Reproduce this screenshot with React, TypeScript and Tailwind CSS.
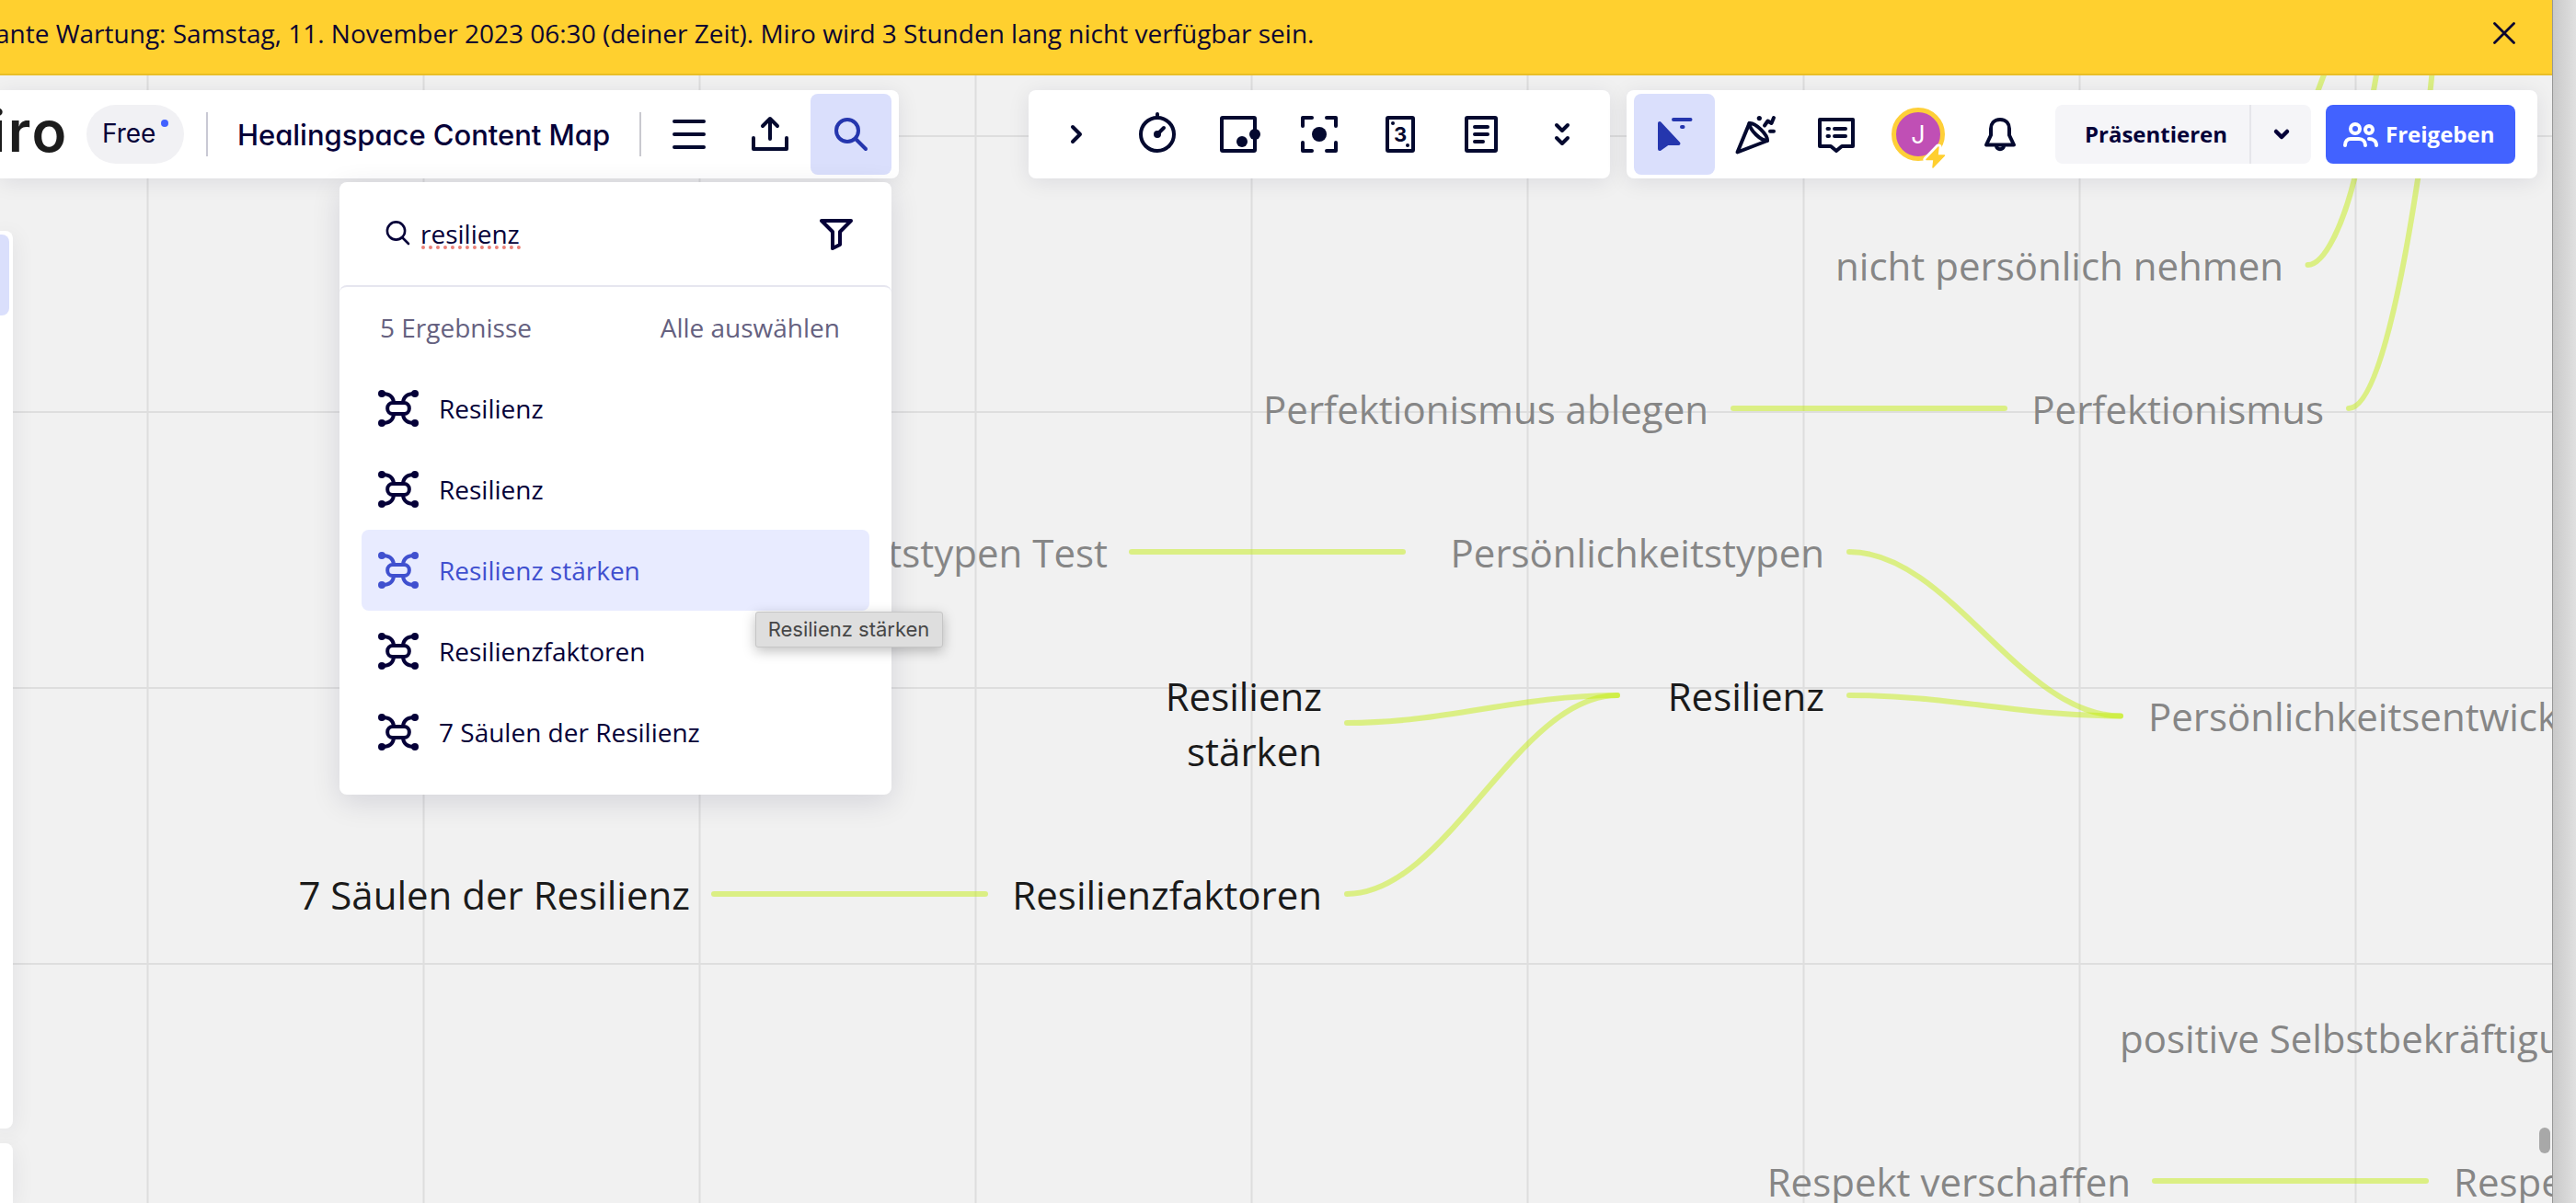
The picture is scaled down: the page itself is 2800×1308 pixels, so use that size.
import React, { useState } from 'react';
import clsx from 'clsx';

interface MapNode {
    text: string;
    baseline: number;
    left?: number;
    right?: number;
    found?: boolean;
}

// left / right are the edges of the text box on the board
const nodes: MapNode[] = [
    { text: 'nicht persönlich nehmen', right: 2482, baseline: 305 },
    { text: 'Perfektionismus ablegen', right: 1857, baseline: 461 },
    { text: 'Perfektionismus', right: 2526, baseline: 461 },
    { text: 'Persönlichkeitstypen Test', right: 1204, baseline: 617 },
    { text: 'Persönlichkeitstypen', right: 1983, baseline: 617 },
    { text: 'Resilienz\nstärken', right: 1437, baseline: 773, found: true },
    { text: 'Resilienz', right: 1983, baseline: 773, found: true },
    { text: 'Persönlichkeitsentwicklung', left: 2335, baseline: 795 },
    { text: '7 Säulen der Resilienz', right: 750, baseline: 989, found: true },
    { text: 'Resilienzfaktoren', right: 1437, baseline: 989, found: true },
    { text: 'positive Selbstbekräftigung', left: 2304, baseline: 1145 },
    { text: 'Respekt verschaffen', right: 2316, baseline: 1301 },
    { text: 'Respekt', left: 2667, baseline: 1301 },
];

const connectors = [
    'M2508.5 288C2527 288 2547 243 2559 195S2578 112 2584 76',
    'M2553 444C2585 444 2612 300 2628 195S2641 100 2644 76',
    'M2516 108L2528 76',
    'M1884 444H2179',
    'M1230 600H1525',
    'M2010 600C2119 600 2196 778.5 2305 778.5',
    'M2010 756C2119 756 2196 778.5 2305 778.5',
    'M1464 786C1573 786 1649 756 1758 756',
    'M1464 972C1573 972 1649 756 1758 756',
    'M776 972H1071',
    'M2342 1284H2637',
];

const results = ['Resilienz', 'Resilienz', 'Resilienz stärken', 'Resilienzfaktoren', '7 Säulen der Resilienz'];

interface ToolProps {
    label: string;
    active?: boolean;
    children: React.ReactNode;
}

const Tool: React.FC<ToolProps> = ({ label, active, children }) => (
    <button type="button" aria-label={label} className={clsx('h-[88px] w-[88px] shrink-0 rounded-lg', active ? 'bg-[#dadffc] text-[#2536ae]' : 'text-[#04092f]')}>
        <svg viewBox="0 0 88 88" className="h-[88px] w-[88px]" fill="none" stroke="currentColor" strokeWidth="4" strokeLinecap="round" strokeLinejoin="round">
            {children}
        </svg>
    </button>
);

const MindMapIcon = () => (
    <svg viewBox="0 0 44 40" className="h-10 w-11 shrink-0" fill="none" stroke="currentColor" strokeWidth="4" strokeLinecap="round">
        <rect x="10.2" y="14" width="23.6" height="12" rx="5.5" />
        <path d="M17 13C16 7 12 4 5 4M27 13C28 7 32 4 39 4M17 27C16 33 12 36 5 36M27 27C28 33 32 36 39 36" />
        <g fill="currentColor" stroke="none">
            <circle cx="4" cy="4" r="4" />
            <circle cx="40" cy="4" r="4" />
            <circle cx="4" cy="36" r="4" />
            <circle cx="40" cy="36" r="4" />
        </g>
    </svg>
);

const Board = () => (
    <div className="absolute inset-0 overflow-hidden bg-[#f1f1f1]">
        <svg className="absolute inset-0 h-full w-full" fill="none">
            {[160.5, 460.5, 760.5, 1060.5, 1360.5, 1660.5, 1960.5, 2260.5, 2560.5].map((x) => (
                <path key={x} d={`M${x} 0V1308`} stroke="#dedede" strokeWidth="2" />
            ))}
            {[148, 448, 748, 1048].map((y) => (
                <path key={y} d={`M0 ${y}H2774`} stroke="#dedede" strokeWidth="2" />
            ))}
            {connectors.map((d) => (
                <path key={d} d={d} stroke="#c1ee00" strokeOpacity="0.45" strokeWidth="6" strokeLinecap="round" />
            ))}
        </svg>
        {nodes.map((node) => (
            <p
                key={node.text}
                className={clsx('absolute text-[42px] leading-[60px] whitespace-pre', node.found ? 'text-[#1a1a1a]' : 'text-[#868686]', node.right && 'text-right')}
                style={{ left: node.left, right: node.right ? 2774 - node.right : undefined, top: node.baseline - 46 }}
            >
                {node.text}
            </p>
        ))}
        <div className="absolute top-[1226px] right-[2px] h-7 w-3 rounded-full bg-[#a8a8a8]" />
    </div>
);

const SearchPanel = () => {
    const [query, setQuery] = useState('resilienz');
    const [active, setActive] = useState(2);

    return (
        <div className="absolute top-[198px] left-[369px] flex h-[666px] w-[600px] flex-col rounded-lg bg-white text-[28px] leading-10 text-[#050038] shadow-[0_8px_32px_rgba(5,0,56,0.12)]">
            <div className="flex h-28 items-center pr-[42px] pl-[49px]">
                <svg viewBox="0 0 32 32" className="-mt-0.5 h-8 w-8" fill="none" stroke="currentColor" strokeWidth="2.6" strokeLinecap="round">
                    <circle cx="12.5" cy="14" r="9.6" />
                    <path d="M19.5 21.5L26 28" />
                </svg>
                <div className="relative ml-[7px] flex-1">
                    <input value={query} onChange={(e) => setQuery(e.target.value)} className="block h-10 w-[300px] outline-none" aria-label="Suche" />
                    {/* spell checker mark */}
                    <div className="absolute top-[33px] left-px w-[108px] border-b-4 border-dotted border-[#ea7f76]" />
                </div>
                <svg viewBox="0 0 36 36" className="mt-0.5 h-9 w-9" fill="none" stroke="currentColor" strokeWidth="4" strokeLinejoin="round">
                    <path d="M2 3H34L22 15V29L14 33V15Z" />
                </svg>
            </div>
            <div className="flex h-[90px] items-center justify-between rounded-t-lg border-t-2 border-[#e6e6ef] pr-[56px] pl-[44px] text-[#656180]">
                <span>5 Ergebnisse</span>
                <button type="button">Alle auswählen</button>
            </div>
            <ul className="px-6">
                {results.map((item, i) => (
                    <li
                        key={i}
                        onMouseEnter={() => setActive(i)}
                        className={clsx('flex h-[88px] items-center gap-[22px] rounded-lg pl-[18px]', i === active && 'bg-[#e8ebff] text-[#4050cf]')}
                    >
                        <MindMapIcon />
                        <span>{item}</span>
                    </li>
                ))}
            </ul>
        </div>
    );
};

const BoardBar = () => (
    <div className="flex h-24 w-[977px] items-center rounded-r-lg bg-white pr-2 shadow-[0_4px_24px_rgba(5,0,56,0.09)]">
        <div className="-ml-[10px] flex h-24 w-[104px] items-center font-['Inter',sans-serif] text-[62px] leading-none font-semibold tracking-[2.5px] text-[#1c1c1c]">
            <span className="-mt-1.5">iro</span>
        </div>
        <div className="flex h-16 w-[106px] shrink-0 rounded-full bg-[#f1f1f4] pl-[17px] font-['Inter',sans-serif] text-[28px] leading-[62px] text-[#050038]">
            Free
            <span className="mt-4 ml-[6px] h-2 w-2 rounded-full bg-[#4262ff]" />
        </div>
        <div className="ml-6 h-12 w-0.5 bg-[#c9c9d4]" />
        <h1 className="mt-0.5 ml-8 w-[437px] whitespace-nowrap font-['Inter',sans-serif] text-[31px] leading-10 font-medium tracking-[-0.04px] text-[#050038] [font-feature-settings:'cv11']">
            Healingspace Content Map
        </h1>
        <div className="h-12 w-0.5 bg-[#c9c9cf]" />
        <div className="ml-auto flex">
            <Tool label="Menü">
                <path d="M28 30H60M28 44H60M28 58H60" />
            </Tool>
            <Tool label="Exportieren">
                <path d="M44 27V49M36 35L44 27L52 35M26 48V60H62V48" />
            </Tool>
            <Tool label="Suche" active>
                <circle cx="40" cy="40" r="12" />
                <path d="M49.5 49.5L60 60" />
            </Tool>
        </div>
    </div>
);

const MeetingBar = () => (
    <div className="flex h-24 w-[632px] items-center rounded-lg bg-white px-2 shadow-[0_4px_24px_rgba(5,0,56,0.09)]">
        <Tool label="Einklappen">
            <path d="M40 36L48 44L40 52" />
        </Tool>
        <Tool label="Timer">
            <circle cx="44" cy="44" r="18" />
            <path d="M44 26V22M44 44L51 37" />
            <circle cx="44" cy="44" r="2.5" fill="currentColor" strokeWidth="3" />
        </Tool>
        <Tool label="Frames">
            <rect x="26" y="26" width="36" height="36" rx="1" />
            <g fill="currentColor" stroke="none">
                <circle cx="62" cy="44" r="6" />
                <circle cx="48" cy="52" r="6" />
            </g>
        </Tool>
        <Tool label="Fokus">
            <path d="M26 35V26H36M52 26H62V35M62 53V62H52M36 62H26V53" />
            <circle cx="44" cy="44" r="8" fill="currentColor" stroke="none" />
        </Tool>
        <Tool label="Schätzen">
            <rect x="30" y="26" width="28" height="36" rx="1" />
            <g fill="currentColor" stroke="none">
                <circle cx="36" cy="32" r="2" />
                <circle cx="52" cy="56" r="2" />
                <text x="44" y="52" textAnchor="middle" className="font-['Inter',sans-serif] text-[22px] font-bold">3</text>
            </g>
        </Tool>
        <Tool label="Notizen">
            <rect x="28" y="26" width="32" height="36" rx="1" />
            <path d="M37 36H51M37 44H51M37 52H46" />
        </Tool>
        <Tool label="Mehr">
            <path d="M38 34L44 40L50 34M38 48L44 54L50 48" />
        </Tool>
    </div>
);

const ShareBar = () => (
    <div className="flex h-24 w-[990px] items-center rounded-lg bg-white pl-2 shadow-[0_4px_24px_rgba(5,0,56,0.09)]">
        <Tool label="Cursor" active>
            <path d="M28 32V60L36.5 54H48.5Z" fill="currentColor" />
            <path d="M43 28H61.5M52 36H53.5" />
        </Tool>
        <Tool label="Reaktionen">
            <path d="M37.5 32L24.5 63.5L57 51" />
            <path d="M37.5 32C44 31 58 45 57 51C50 51 38 40 37.5 32Z" />
            <path d="M54 34.5L57.5 29.5L61.5 32L64 26M60 40.7H64" />
            <circle cx="48.3" cy="26.6" r="2.6" fill="currentColor" stroke="none" />
        </Tool>
        <Tool label="Kommentare">
            <path d="M26 28H62V57H50L44 62L38 57H26Z" />
            <path d="M34.5 38H36M42 38H54M34.5 46H36M42 46H54" />
        </Tool>
        <Tool label="Profil">
            <circle cx="45" cy="44" r="26.5" fill="#c04fb5" stroke="#fecf38" strokeWidth="5" />
            <text x="45" y="54" textAnchor="middle" fill="#fff" stroke="none" className="font-['Inter',sans-serif] text-[27px]">J</text>
            <path d="M67 58L54 71.5H62L61 80L73.5 67H66Z" fill="#fff" stroke="#fff" strokeWidth="7" />
            <path d="M67 58L54 71.5H62L61 80L73.5 67H66Z" fill="#ffcf2f" stroke="#ffcf2f" strokeWidth="1.5" />
        </Tool>
        <Tool label="Benachrichtigungen">
            <path d="M46 28C39 28 36 33 36 38V45L31 55.5H61L56 45V38C56 33 53 28 46 28Z" />
            <path d="M42 56.5C42 61.5 50 61.5 50 56.5" />
        </Tool>
        <div className="ml-[18px] flex h-16 w-[278px] overflow-hidden rounded-lg bg-[#f5f5f8] text-2xl font-bold text-[#050038]">
            <button type="button" className="w-[213px] border-r-2 border-[#e6e6ea] pl-2">Präsentieren</button>
            <button type="button" aria-label="Optionen" className="flex flex-1 items-center justify-center">
                <svg viewBox="0 0 20 14" className="h-3.5 w-5" fill="none" stroke="currentColor" strokeWidth="4.5" strokeLinecap="round" strokeLinejoin="round">
                    <path d="M4 4L10 10L16 4" />
                </svg>
            </button>
        </div>
        <button type="button" className="ml-4 flex h-16 w-[206px] items-center rounded-lg bg-[#4262ff] pl-[18px] text-2xl font-bold text-white">
            <svg viewBox="0 0 40 32" className="mr-[7px] h-8 w-10" fill="none" stroke="currentColor" strokeWidth="4" strokeLinecap="round">
                <circle cx="14" cy="10" r="5" />
                <circle cx="29" cy="11" r="4" />
                <path d="M3 28C3 23 6 21 9 21H18C22 21 25 24 25 28M29 21C33.5 21 37 23.5 37 28" />
            </svg>
            Freigeben
        </button>
    </div>
);

const App: React.FC = () => {
    const [showBanner, setShowBanner] = useState(true);

    return (
        <div className="flex h-[1308px] w-[2800px] overflow-hidden font-['Open_Sans',sans-serif]">
            <main className="relative w-[2774px] overflow-hidden">
                <Board />
                <div className="relative flex h-full flex-col">
                    {showBanner && (
                        <div className="flex h-[82px] shrink-0 items-center justify-between border-b-2 border-[#e9be28] bg-[#ffd02f] pr-10 pb-2 text-[28px] text-[#0c0630]">
                            <p className="-ml-[5px] whitespace-nowrap">
                                ante Wartung: Samstag, 11. November 2023 06:30 (deiner Zeit). Miro wird 3 Stunden lang nicht verfügbar sein.
                            </p>
                            <button type="button" aria-label="Schließen" onClick={() => setShowBanner(false)}>
                                <svg viewBox="0 0 24 24" className="h-6 w-6" stroke="currentColor" strokeWidth="2.8" strokeLinecap="round">
                                    <path d="M1.5 1.5L22.5 22.5M22.5 1.5L1.5 22.5" />
                                </svg>
                            </button>
                        </div>
                    )}
                    <header className="mt-4 flex shrink-0">
                        <BoardBar />
                        <div className="ml-[141px]">
                            <MeetingBar />
                        </div>
                        <div className="ml-[18px]">
                            <ShareBar />
                        </div>
                    </header>
                    <aside className="mt-[57px] flex flex-1 flex-col gap-4">
                        <div className="h-[976px] w-3.5 shrink-0 rounded-r-lg bg-white pt-1 shadow-[0_4px_24px_rgba(5,0,56,0.09)]">
                            <div className="h-[88px] w-2.5 rounded-r-lg bg-[#dadffc]" />
                        </div>
                        <div className="w-3.5 flex-1 rounded-tr-lg bg-white shadow-[0_4px_24px_rgba(5,0,56,0.09)]" />
                    </aside>
                </div>
                <SearchPanel />
                <div className="absolute top-[665px] left-[821px] flex h-[39px] w-[204px] items-center justify-center rounded-[3px] border border-[#c6c6c6] bg-[#dedede] pr-px font-['Inter',sans-serif] text-[22px] whitespace-nowrap text-[#474747] shadow-[0_4px_14px_rgba(0,0,0,0.25)]">
                    Resilienz stärken
                </div>
            </main>
            <div className="w-[26px] border-l border-[#979797] bg-gradient-to-r from-[#c9c9c9] to-[#e0e0e0]" />
        </div>
    );
};

export default App;
